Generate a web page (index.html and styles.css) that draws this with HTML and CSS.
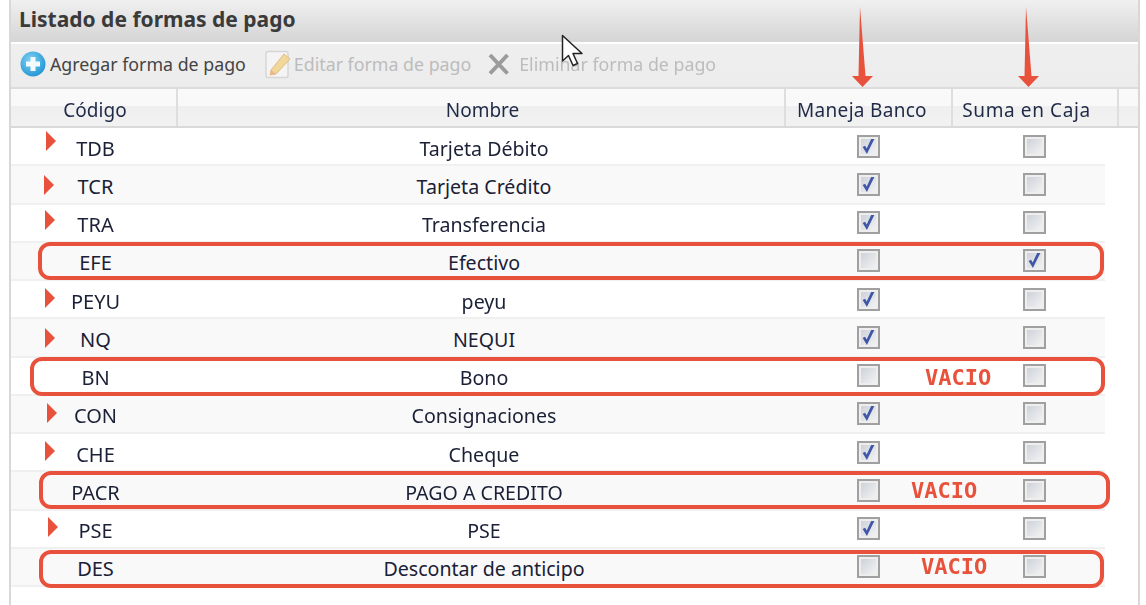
FILE: index.html
```html
<!DOCTYPE html>
<html lang="es">
<head>
<meta charset="utf-8">
<title>Listado de formas de pago</title>
<link rel="stylesheet" href="styles.css">
</head>
<body>
<svg width="0" height="0" class="defs" aria-hidden="true">
  <symbol id="tick" viewBox="0 0 16 16"><path d="M2.500 8.500 L6.500 15 L13.500 1 L10.500 1 L6.300 9.800 L4.800 7.200 Z" fill="#3f57a6"/></symbol>
</svg>
<main class="page">
  <section class="panel">
    <h1 class="title">Listado de formas de pago</h1>
    <div class="toolbar">
      <button class="tool">
        <svg class="ico" width="26" height="26" viewBox="0 0 26 26"><defs><radialGradient id="blue" cx=".4" cy=".35" r=".75"><stop offset="0" stop-color="#7fd2f5"/><stop offset="1" stop-color="#1a8fd0"/></radialGradient></defs><circle cx="13" cy="13" r="12.500" fill="url(#blue)"/><path d="M10.500 6h5v4.500H20v5h-4.500V20h-5v-4.500H6v-5h4.500z" fill="#f2fbff"/></svg>
        Agregar forma de pago
      </button>
      <button class="tool off tool-edit">
        <svg class="ico" width="26" height="29" viewBox="0 0 26 29"><rect x="1" y="1.500" width="22" height="26" rx="2" fill="#f4f4f4" stroke="#d6d6d6" stroke-width="1.500"/><path d="M6 20 L19 4 L25 9 L11 24 L5 25 Z" fill="#f2d79a" stroke="#e2bc82"/><path d="M6 20 L5 25 L11 24 Z" fill="#e8b98c"/></svg>
        Editar forma de pago
      </button>
      <button class="tool off tool-del">
        <svg class="ico" width="23" height="23" viewBox="0 0 23 23"><path d="M3 2 L20.500 20.500 M20.500 2 L3 20.500" stroke="#9b9b9b" stroke-width="4"/></svg>
        Eliminar forma de pago
      </button>
    </div>
    <div class="head">
      <div class="hcell hc1">Código</div>
      <div class="hcell hc2">Nombre</div>
      <div class="hcell hc3">Maneja Banco</div>
      <div class="hcell hc4">Suma en Caja</div>
      <div class="hcell hc5"></div>
    </div>
    <div class="rows">
      <div class="row"><span class="code">TDB</span><span class="name">Tarjeta Débito</span><span class="chk on"><svg><use href="#tick"/></svg></span><span class="chk c2"></span></div>
      <div class="row"><span class="code">TCR</span><span class="name">Tarjeta Crédito</span><span class="chk on"><svg><use href="#tick"/></svg></span><span class="chk c2"></span></div>
      <div class="row"><span class="code">TRA</span><span class="name">Transferencia</span><span class="chk on"><svg><use href="#tick"/></svg></span><span class="chk c2"></span></div>
      <div class="row"><span class="code">EFE</span><span class="name">Efectivo</span><span class="chk"></span><span class="chk c2 on"><svg><use href="#tick"/></svg></span></div>
      <div class="row"><span class="code">PEYU</span><span class="name">peyu</span><span class="chk on"><svg><use href="#tick"/></svg></span><span class="chk c2"></span></div>
      <div class="row"><span class="code">NQ</span><span class="name">NEQUI</span><span class="chk on"><svg><use href="#tick"/></svg></span><span class="chk c2"></span></div>
      <div class="row"><span class="code">BN</span><span class="name">Bono</span><span class="chk"></span><span class="chk c2"></span></div>
      <div class="row"><span class="code">CON</span><span class="name">Consignaciones</span><span class="chk on"><svg><use href="#tick"/></svg></span><span class="chk c2"></span></div>
      <div class="row"><span class="code">CHE</span><span class="name">Cheque</span><span class="chk on"><svg><use href="#tick"/></svg></span><span class="chk c2"></span></div>
      <div class="row"><span class="code">PACR</span><span class="name">PAGO A CREDITO</span><span class="chk"></span><span class="chk c2"></span></div>
      <div class="row"><span class="code">PSE</span><span class="name">PSE</span><span class="chk on"><svg><use href="#tick"/></svg></span><span class="chk c2"></span></div>
      <div class="row"><span class="code">DES</span><span class="name">Descontar de anticipo</span><span class="chk"></span><span class="chk c2"></span></div>
    </div>
  </section>

  <div class="box b-efe"></div>
  <div class="box b-bn"></div>
  <div class="box b-pacr"></div>
  <div class="box b-des"></div>
  <span class="vacio v-bn">VACIO</span>
  <span class="vacio v-pacr">VACIO</span>
  <span class="vacio v-des">VACIO</span>
  <i class="tri t1"></i><i class="tri t2"></i><i class="tri t3"></i><i class="tri t4"></i>
  <i class="tri t5"></i><i class="tri t6"></i><i class="tri t7"></i><i class="tri t8"></i>
  <svg class="arrow a1" width="24" height="81" viewBox="0 0 24 81"><path d="M9 0 L7.500 69 L1 69 L11.500 80 L22 69 L14.500 69 Z" fill="#e8523c"/></svg>
  <svg class="arrow a2" width="24" height="81" viewBox="0 0 24 81"><path d="M9 0 L7.500 69 L1 69 L11.500 80 L22 69 L14.500 69 Z" fill="#e8523c"/></svg>
  <svg class="cursor" width="24" height="34" viewBox="0 0 24 34"><path d="M1.500 1.500 V27 L7.500 21.500 L12 31.500 L16.500 29.500 L12 19.500 L21 19.500 Z" fill="#fff" stroke="#222" stroke-width="1.500" stroke-linejoin="round"/></svg>
</main>
</body>
</html>
```
FILE: styles.css
```css
* { box-sizing: border-box; }
html, body { margin: 0; height: 100%; background: #fff; overflow: hidden; }
.defs { position: absolute; }
.page { position: relative; width: 1146px; height: 605px; font-family: "Noto Sans", sans-serif; }

.panel {
  width: 1131px; height: 605px; margin-left: 9px;
  border-left: 2px solid #d8d8d8; border-right: 2px solid #d8d8d8;
  display: flex; flex-direction: column;
  filter: blur(.35px);
}
.title {
  margin: 0; height: 42px; padding: 5px 0 0 8px;
  font-size: 21px; line-height: 28px; font-weight: 700; color: #3a3a3a;
  background: linear-gradient(#f0f0f0, #d6d6d6);
  border-bottom: 2px solid #d6d6d6;
}
.toolbar {
  height: 47px; padding: 0 0 3px 9px;
  display: flex; align-items: center;
  background: linear-gradient(#efefef, #ececec);
  border-top: 2px solid #fff;
  border-bottom: 2px solid #dcdcdc;
}
.tool {
  display: flex; align-items: center; gap: 4px; padding: 0; border: 0; background: none;
  font: inherit; font-size: 17.800px; color: #444; white-space: nowrap;
}
.tool.off { color: #bcbcbc; }
.tool-edit { margin-left: 19px; gap: 3px; }
.tool-del { margin-left: 16px; gap: 9px; }
.ico { flex: none; }

.head { height: 39px; display: flex; background: linear-gradient(#f9f9f9 45%, #efefef 45%, #f2f2f2); border-bottom: 2px solid #d9d9d9; }
.hcell {
  display: flex; align-items: center; justify-content: center;
  font-size: 19px; color: #1f2a46; padding-top: 4px;
  border-right: 2px solid #dedede;
}
.hc1 { width: 167px; padding-left: 3px; }
.hc2 { width: 608px; padding-left: 3px; }
.hc3 { width: 167px; padding-right: 13px; letter-spacing: .3px; }
.hc4 { width: 166px; padding-right: 17px; letter-spacing: .6px; }
.hc5 { flex: 1; border-right: 0; }

.rows { display: grid; grid-auto-rows: 38.250px; width: 1094px; }
.row {
  display: grid; grid-template-columns: 166px 609px 164px 1fr;
  align-items: center; justify-items: center;
  color: #1a2036;
  border-bottom: 2px solid #f0f0f0;
}
.row:nth-child(even) { background: #f9f9f9; }
.code { padding-top: 4px; padding-left: 3px; font-size: 20px; }
.name { padding-top: 4px; padding-left: 5px; font-size: 19.600px; }
.chk {
  width: 23px; height: 23px;
  border: 2px solid #a0a0a0;
  box-shadow: inset 0 0 0 2px #eeeeee;
  background: linear-gradient(135deg, #c9ced6, #f6f6f6);
  display: flex; align-items: center; justify-content: center;
}
.chk svg { width: 17px; height: 17px; display: block; }
.c2 { margin-left: 14px; }

.box { position: absolute; border: 4px solid #e8523c; border-radius: 12px; }
.b-efe { left: 38px; top: 242px; width: 1066px; height: 38px; }
.b-bn { left: 30px; top: 357px; width: 1075px; height: 39px; }
.b-pacr { left: 39px; top: 471px; width: 1071px; height: 38px; }
.b-des { left: 39px; top: 550px; width: 1065px; height: 38px; }

.vacio { position: absolute; font: 700 22px/26px "DejaVu Sans Mono", monospace; color: #e8523c; }
.v-bn { left: 925px; top: 365px; }
.v-pacr { left: 911px; top: 478px; }
.v-des { left: 921px; top: 554px; }

.tri { position: absolute; width: 0; height: 0; border-left: 10px solid #e8523c; border-top: 10px solid transparent; border-bottom: 10px solid transparent; }
.t1 { left: 46px; top: 131px; }
.t2 { left: 44px; top: 175px; }
.t3 { left: 45px; top: 210px; }
.t4 { left: 45px; top: 288px; }
.t5 { left: 45px; top: 328px; }
.t6 { left: 47px; top: 403px; }
.t7 { left: 45px; top: 441px; }
.t8 { left: 48px; top: 517px; }

.arrow { position: absolute; top: 7px; }
.a1 { left: 851px; }
.a2 { left: 1017px; }
.cursor { position: absolute; left: 561px; top: 34px; }
```
